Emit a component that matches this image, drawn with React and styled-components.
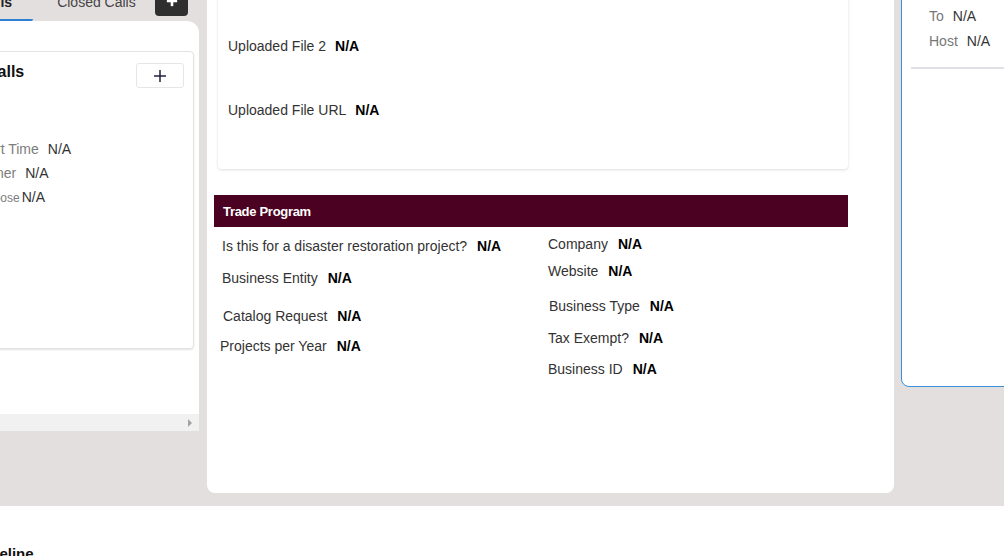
import React from 'react';
import styled, { createGlobalStyle } from 'styled-components';

const callInfo = [
  { label: 'Start Time', value: 'N/A' },
  { label: 'Owner', value: 'N/A' },
  { label: 'Purpose', value: 'N/A', small: true },
];

const uploads = [
  { label: 'Uploaded File 1', value: 'N/A' },
  { label: 'Uploaded File 2', value: 'N/A' },
  { label: 'Uploaded File URL', value: 'N/A' },
];

const tradeLeft = [
  { label: 'Is this for a disaster restoration project?', mt: 9, x: 8 },
  { label: 'Business Entity', mt: 12, x: 8 },
  { label: 'Catalog Request', mt: 18, x: 9 },
  { label: 'Projects per Year', mt: 10, x: 6 },
];

const tradeRight = [
  { label: 'Company', mt: 7, x: 0 },
  { label: 'Website', mt: 7, x: 0 },
  { label: 'Business Type', mt: 15, x: 1 },
  { label: 'Tax Exempt?', mt: 12, x: 0 },
  { label: 'Business ID', mt: 11, x: 0 },
];

const meta = [
  { label: 'From', value: 'N/A' },
  { label: 'To', value: 'N/A' },
  { label: 'Host', value: 'N/A' },
];

const PlusIcon = ({ size = 14, color = '#1f2040', weight = 1.5 }) => (
  <svg width={size} height={size} viewBox="0 0 14 14" fill="none">
    <line x1="7" y1="1" x2="7" y2="13" stroke={color} strokeWidth={weight} />
    <line x1="1" y1="7" x2="13" y2="7" stroke={color} strokeWidth={weight} />
  </svg>
);

const App = () => {
  return (
    <Page>
      <GlobalStyle />
      <Board>
        <Columns>
          <LeftCol>
            <Tabs>
              <Tab active>Open Calls</Tab>
              <Tab>Closed Calls</Tab>
              <DarkAdd>
                <PlusIcon size={12} color="#fff" weight={3} />
              </DarkAdd>
            </Tabs>
            <LeftPanel>
              <CallsCard>
                <CardHeader>
                  <CardTitle>Calls</CardTitle>
                  <OutlineButton>
                    <PlusIcon />
                  </OutlineButton>
                </CardHeader>
                <InfoList>
                  {callInfo.map(row => (
                    <InfoRow key={row.label}>
                      <InfoLabel small={row.small}>{row.label}</InfoLabel>
                      <InfoValue>{row.value}</InfoValue>
                    </InfoRow>
                  ))}
                </InfoList>
              </CallsCard>
              <ScrollTrack>
                <ScrollArrow />
              </ScrollTrack>
            </LeftPanel>
          </LeftCol>

          <MiddlePanel>
            <UploadCard>
              {uploads.map(row => (
                <UploadRow key={row.label}>
                  <FieldLabel>{row.label}</FieldLabel>
                  <FieldValue>{row.value}</FieldValue>
                </UploadRow>
              ))}
            </UploadCard>
            <TradeHeader>Trade Program</TradeHeader>
            <TradeGrid>
              <TradeCol>
                {tradeLeft.map(f => (
                  <Field key={f.label} mt={f.mt} x={f.x}>
                    <FieldLabel>{f.label}</FieldLabel>
                    <FieldValue>N/A</FieldValue>
                  </Field>
                ))}
              </TradeCol>
              <TradeCol>
                {tradeRight.map(f => (
                  <Field key={f.label} mt={f.mt} x={f.x}>
                    <FieldLabel>{f.label}</FieldLabel>
                    <FieldValue>N/A</FieldValue>
                  </Field>
                ))}
              </TradeCol>
            </TradeGrid>
          </MiddlePanel>

          <RightPanel>
            <MetaList>
              {meta.map(row => (
                <MetaRow key={row.label}>
                  <MetaLabel>{row.label}</MetaLabel>
                  <InfoValue>{row.value}</InfoValue>
                </MetaRow>
              ))}
            </MetaList>
            <Divider />
          </RightPanel>
        </Columns>
      </Board>
      <TimelineSection>
        <TimelineTitle>Timeline</TimelineTitle>
      </TimelineSection>
    </Page>
  );
};

const GlobalStyle = createGlobalStyle`
  body {
    margin: 0;
    background: #fff;
    font-family: "Liberation Sans", Arial, sans-serif;
  }
  * { box-sizing: border-box; }
`;

const Page = styled.div`
  width: 1004px;
  overflow: hidden;
`;

const Board = styled.section`
  height: 506px;
  background: #e4dfdf;
  overflow: hidden;
`;

const Columns = styled.div`
  display: flex;
  align-items: flex-start;
  margin-left: -82px;
`;

const LeftCol = styled.div`
  width: 281px;
  flex-shrink: 0;
  margin-top: -14px;
  display: flex;
  flex-direction: column;
`;

const Tabs = styled.div`
  height: 35px;
  display: flex;
  align-items: flex-start;
  gap: 3px;
`;

const Tab = styled.div`
  height: 35px;
  min-width: 0;
  flex-shrink: ${props => (props.active ? 0 : 1)};
  padding: 6px 21px 0;
  font-size: 14px;
  line-height: 20px;
  white-space: nowrap;
  color: ${props => (props.active ? '#222' : '#444')};
  font-weight: ${props => (props.active ? 700 : 400)};
  border-bottom: 2px solid ${props => (props.active ? '#2f7fd3' : 'transparent')};
  border-radius: ${props => (props.active ? '0 0 2px 0' : '0')};
`;

const DarkAdd = styled.div`
  flex-shrink: 0;
  margin-left: auto;
  margin-right: 11px;
  width: 33px;
  height: 30px;
  background: #2f2f2f;
  border-radius: 4px;
  display: grid;
  place-items: center;
`;

const LeftPanel = styled.div`
  height: 410px;
  background: #fff;
  border-top-right-radius: 12px;
  display: flex;
  flex-direction: column;
`;

const CallsCard = styled.div`
  margin: 30px 5px 0 12px;
  height: 298px;
  border: 1px solid #e3e3e3;
  border-radius: 4px;
  box-shadow: 0 1px 2px rgba(0, 0, 0, 0.12);
  padding: 12px 9px 0 44px;
`;

const CardHeader = styled.div`
  display: flex;
  justify-content: space-between;
  align-items: flex-start;
  margin-top: -1px;
`;

const CardTitle = styled.h3`
  margin: 1px 0 0 11px;
  font-size: 16px;
  line-height: 16px;
  font-weight: 700;
  color: #111;
`;

const OutlineButton = styled.div`
  width: 48px;
  height: 25px;
  border: 1px solid #e6e6e6;
  border-radius: 3px;
  background: #fff;
  display: grid;
  place-items: center;
`;

const InfoList = styled.div`
  margin-top: 49px;
`;

const InfoRow = styled.div`
  display: flex;
  align-items: baseline;
  line-height: 24px;
  font-size: 14px;
  white-space: nowrap;
`;

const InfoLabel = styled.span`
  color: #7d7d7d;
  font-size: ${props => (props.small ? '12px' : '14px')};
  margin-right: ${props => (props.small ? '2px' : '9px')};
`;

const InfoValue = styled.span`
  color: #333;
  font-size: 14px;
`;

const ScrollTrack = styled.div`
  margin-top: auto;
  height: 17px;
  background: #f1f1f1;
  display: flex;
  justify-content: flex-end;
  align-items: center;
  padding-right: 7px;
`;

const ScrollArrow = styled.span`
  width: 0;
  height: 0;
  border-left: 4px solid #a3a3a3;
  border-top: 4px solid transparent;
  border-bottom: 4px solid transparent;
`;

const MiddlePanel = styled.div`
  width: 687px;
  flex-shrink: 0;
  margin: -60px 0 0 8px;
  height: 553px;
  background: #fff;
  border-radius: 0 0 8px 8px;
  padding: 10px 46px 0 7px;
`;

const UploadCard = styled.div`
  margin-left: 4px;
  background: #fff;
  border-radius: 4px;
  box-shadow: 0 1px 3px rgba(0, 0, 0, 0.14);
  padding: 0 10px 27px;
`;

const UploadRow = styled.div`
  height: 64px;
  display: flex;
  align-items: center;
  gap: 9px;
  font-size: 14px;
`;

const FieldLabel = styled.span`
  color: #333;
  font-size: 14px;
`;

const FieldValue = styled.span`
  color: #000;
  font-size: 14px;
  font-weight: 700;
`;

const TradeHeader = styled.div`
  margin-top: 26px;
  height: 32px;
  background: #4b0121;
  color: #fff;
  font-size: 13px;
  font-weight: 700;
  letter-spacing: -0.3px;
  padding-left: 9px;
  display: flex;
  align-items: center;
`;

const TradeGrid = styled.div`
  display: grid;
  grid-template-columns: 334px 1fr;
`;

const TradeCol = styled.div`
  display: flex;
  flex-direction: column;
`;

const Field = styled.div`
  display: flex;
  gap: 10px;
  line-height: 20px;
  white-space: nowrap;
  margin-top: ${props => props.mt}px;
  padding-left: ${props => props.x}px;
`;

const RightPanel = styled.div`
  width: 200px;
  flex-shrink: 0;
  margin: -60px 0 0 7px;
  height: 447px;
  background: #fff;
  border: 1.5px solid #3a8fdc;
  border-radius: 0 0 0 8px;
  padding-top: 38px;
`;

const MetaList = styled.div`
  padding-left: 27px;
`;

const MetaRow = styled.div`
  display: flex;
  align-items: baseline;
  line-height: 25px;
  font-size: 14px;
`;

const MetaLabel = styled.span`
  color: #777;
  margin-right: 9px;
`;

const Divider = styled.div`
  margin: 13px 0 0 9px;
  height: 2px;
  background: #dfe1e4;
`;

const TimelineSection = styled.section`
  padding-top: 39px;
  height: 80px;
`;

const TimelineTitle = styled.h2`
  margin: 0 0 0 -27px;
  font-size: 15px;
  line-height: 18px;
  font-weight: 700;
  color: #111;
`;

export default App;
